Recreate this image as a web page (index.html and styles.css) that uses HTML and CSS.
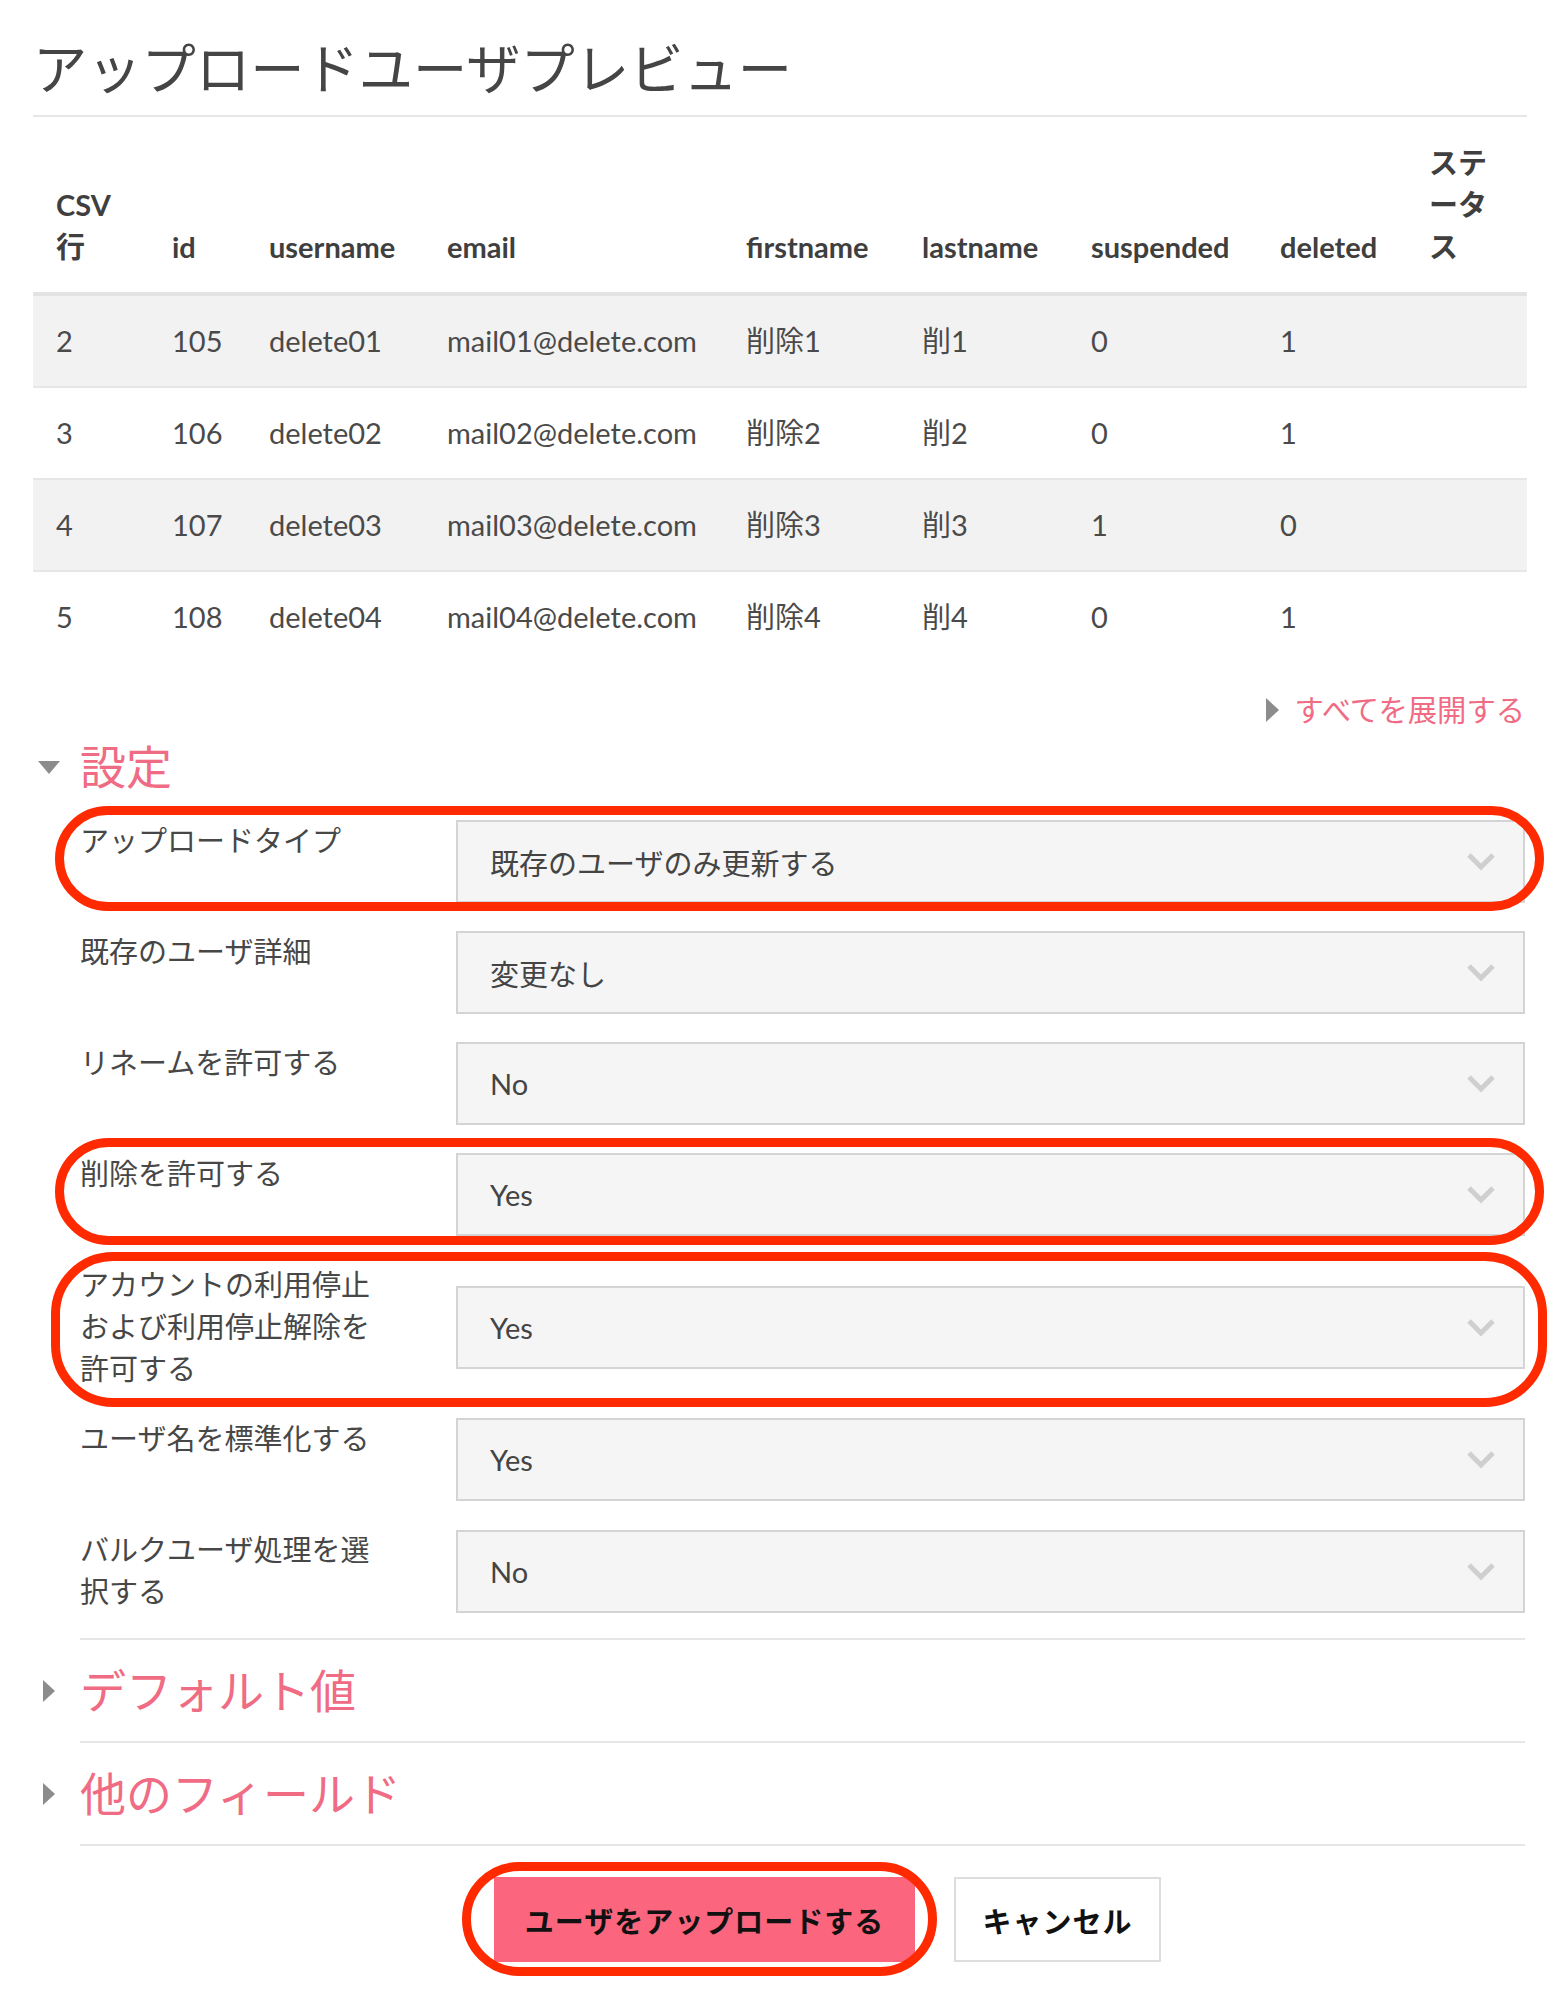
FILE: index.html
```html
<!DOCTYPE html>
<html lang="ja">
<head>
<meta charset="utf-8">
<title>アップロードユーザプレビュー</title>
<link rel="stylesheet" href="styles.css">
</head>
<body>
<div class="page">
  <h2 class="title">アップロードユーザプレビュー</h2>

  <table class="preview">
    <colgroup>
      <col class="c1"><col class="c2"><col class="c3"><col class="c4"><col class="c5"><col class="c6"><col class="c7"><col class="c8"><col class="c9">
    </colgroup>
    <thead>
      <tr>
        <th>CSV<br>行</th><th>id</th><th>username</th><th>email</th><th>firstname</th><th>lastname</th><th>suspended</th><th>deleted</th><th>ステ<br>ータ<br>ス</th>
      </tr>
    </thead>
    <tbody>
      <tr class="odd"><td>2</td><td>105</td><td>delete01</td><td>mail01@delete.com</td><td>削除1</td><td>削1</td><td>0</td><td>1</td><td></td></tr>
      <tr><td>3</td><td>106</td><td>delete02</td><td>mail02@delete.com</td><td>削除2</td><td>削2</td><td>0</td><td>1</td><td></td></tr>
      <tr class="odd"><td>4</td><td>107</td><td>delete03</td><td>mail03@delete.com</td><td>削除3</td><td>削3</td><td>1</td><td>0</td><td></td></tr>
      <tr class="last"><td>5</td><td>108</td><td>delete04</td><td>mail04@delete.com</td><td>削除4</td><td>削4</td><td>0</td><td>1</td><td></td></tr>
    </tbody>
  </table>

  <div class="expand-all">
    <svg class="tri-right-sm" width="13" height="24" viewBox="0 0 13 24"><path d="M0 0 L13 12 L0 24 Z" fill="#8c8c8c"/></svg>
    <a class="pink-link">すべてを展開する</a>
  </div>

  <div class="settings">
    <div class="legend">
      <svg class="tri-down" width="22" height="13" viewBox="0 0 22 13"><path d="M0 0 L22 0 L11 13 Z" fill="#8c8c8c"/></svg>
      <span class="legend-text">設定</span>
    </div>

    <div class="frow">
      <div class="mark mark-a"></div>
      <div class="flabel">アップロードタイプ</div>
      <div class="fselect"><span>既存のユーザのみ更新する</span><svg class="chev" width="30" height="19" viewBox="0 0 30 19"><path d="M3 3 L15 15 L27 3" fill="none" stroke="#cfcfcf" stroke-width="5"/></svg></div>
    </div>
    <div class="frow">
      <div class="flabel">既存のユーザ詳細</div>
      <div class="fselect"><span>変更なし</span><svg class="chev" width="30" height="19" viewBox="0 0 30 19"><path d="M3 3 L15 15 L27 3" fill="none" stroke="#cfcfcf" stroke-width="5"/></svg></div>
    </div>
    <div class="frow">
      <div class="flabel">リネームを許可する</div>
      <div class="fselect"><span>No</span><svg class="chev" width="30" height="19" viewBox="0 0 30 19"><path d="M3 3 L15 15 L27 3" fill="none" stroke="#cfcfcf" stroke-width="5"/></svg></div>
    </div>
    <div class="frow">
      <div class="mark mark-b"></div>
      <div class="flabel">削除を許可する</div>
      <div class="fselect"><span>Yes</span><svg class="chev" width="30" height="19" viewBox="0 0 30 19"><path d="M3 3 L15 15 L27 3" fill="none" stroke="#cfcfcf" stroke-width="5"/></svg></div>
    </div>
    <div class="frow">
      <div class="mark mark-c"></div>
      <div class="flabel">アカウントの利用停止および利用停止解除を許可する</div>
      <div class="fselect"><span>Yes</span><svg class="chev" width="30" height="19" viewBox="0 0 30 19"><path d="M3 3 L15 15 L27 3" fill="none" stroke="#cfcfcf" stroke-width="5"/></svg></div>
    </div>
    <div class="frow">
      <div class="flabel">ユーザ名を標準化する</div>
      <div class="fselect"><span>Yes</span><svg class="chev" width="30" height="19" viewBox="0 0 30 19"><path d="M3 3 L15 15 L27 3" fill="none" stroke="#cfcfcf" stroke-width="5"/></svg></div>
    </div>
    <div class="frow last-row">
      <div class="flabel">バルクユーザ処理を選択する</div>
      <div class="fselect"><span>No</span><svg class="chev" width="30" height="19" viewBox="0 0 30 19"><path d="M3 3 L15 15 L27 3" fill="none" stroke="#cfcfcf" stroke-width="5"/></svg></div>
    </div>

    <div class="section-sep"></div>

    <div class="collapsed">
      <div class="legend closed">
        <svg class="tri-right" width="12" height="22" viewBox="0 0 12 22"><path d="M0 0 L12 11 L0 22 Z" fill="#8c8c8c"/></svg>
        <span class="legend-text">デフォルト値</span>
      </div>
    </div>
    <div class="collapsed">
      <div class="legend closed">
        <svg class="tri-right" width="12" height="22" viewBox="0 0 12 22"><path d="M0 0 L12 11 L0 22 Z" fill="#8c8c8c"/></svg>
        <span class="legend-text">他のフィールド</span>
      </div>
    </div>

    <div class="buttons">
      <div class="btn-wrap">
        <div class="mark mark-d"></div>
        <button class="btn btn-primary">ユーザをアップロードする</button>
      </div>
      <button class="btn btn-secondary">キャンセル</button>
    </div>
  </div>
</div>
</body>
</html>
```

FILE: styles.css
```css
html, body {
  margin: 0;
  padding: 0;
  background: #ffffff;
}

body {
  font-family: Lato, "Noto Sans CJK JP", sans-serif;
  color: #464646;
}

.page {
  width: 1494px;
  margin-left: 33px;
  padding-bottom: 36px;
}

.title {
  margin: 36px 0 0;
  padding: 0;
  font-size: 54.3px;
  line-height: 64px;
  font-weight: 400;
  color: #454545;
  height: 79px;
  border-bottom: 2px solid #e6e6e6;
}

.preview {
  width: 1494px;
  border-collapse: collapse;
  table-layout: fixed;
  font-size: 29px;
  margin-top: 0;
}

.c1 { width: 116px; }
.c2 { width: 97px; }
.c3 { width: 178px; }
.c4 { width: 299px; }
.c5 { width: 176px; }
.c6 { width: 169px; }
.c7 { width: 189px; }
.c8 { width: 149px; }
.c9 { width: 121px; }

.preview th {
  text-align: left;
  vertical-align: bottom;
  font-weight: 700;
  color: #3f3f3f;
  line-height: 42px;
  padding: 25px 23px 24px;
  border-bottom: 4px solid #e3e3e3;
}

.preview td {
  line-height: 42px;
  padding: 24px 23px 24px;
  color: #4a4a4a;
  border-top: 2px solid #e6e6e6;
  white-space: nowrap;
}

.preview tr.odd td {
  background: #f2f2f2;
}

.expand-all {
  display: flex;
  justify-content: flex-end;
  align-items: center;
  margin-top: 27px;
  height: 42px;
  padding-right: 2px;
}

.tri-right-sm {
  margin-right: 15px;
}

.pink-link {
  font-size: 29.3px;
  line-height: 42px;
  color: #f06b84;
}

.settings {
  margin-left: 47px;
  width: 1445px;
}

.legend {
  display: flex;
  align-items: center;
  margin-left: -47px;
  height: 56px;
  margin-top: 8px;
  margin-bottom: 25px;
}

.tri-down {
  margin-left: 5px;
  margin-right: 20px;
}

.legend-text {
  font-size: 46px;
  line-height: 56px;
  color: #f06b84;
}

.frow {
  position: relative;
  display: flex;
  align-items: center;
  margin-bottom: 28px;
}

.frow.last-row {
  margin-bottom: 0;
}

.flabel {
  align-self: flex-start;
  width: 300px;
  margin-right: 76px;
  font-size: 29px;
  line-height: 42px;
  color: #474747;
}

.fselect {
  flex: 1;
  height: 83px;
  box-sizing: border-box;
  border: 2px solid #d4d4d4;
  background: #f5f5f5;
  display: flex;
  align-items: center;
  justify-content: space-between;
  padding: 0 27px 0 32px;
  font-size: 29px;
  color: #444;
}

.section-sep {
  height: 25px;
  border-bottom: 2px solid #e6e6e6;
}

.collapsed {
  height: 101px;
  border-bottom: 2px solid #e6e6e6;
  display: flex;
  align-items: center;
}

.collapsed .legend {
  margin-top: 0;
  margin-bottom: 0;
}

.tri-right {
  margin-left: 10px;
  margin-right: 25px;
}

.buttons {
  display: flex;
  align-items: center;
  margin-top: 31px;
  margin-left: 414px;
  gap: 39px;
}

.btn-wrap {
  position: relative;
}

.btn {
  height: 85px;
  font-family: Lato, "Noto Sans CJK JP", sans-serif;
  font-size: 29px;
  font-weight: 700;
  color: #111;
  letter-spacing: 1px;
  cursor: pointer;
}

.btn-primary {
  position: relative;
  display: block;
  width: 421px;
  background: #fb667e;
  border: none;
  padding: 0;
}

.btn-secondary {
  width: 207px;
  background: #ffffff;
  border: 2px solid #dddddd;
  padding: 0;
}

.mark {
  position: absolute;
  border: 9px solid #ff2a00;
  box-sizing: border-box;
  pointer-events: none;
  z-index: 2;
}

.mark-a {
  top: -14px;
  bottom: -8px;
  left: -25px;
  right: -19px;
  border-radius: 54px;
}

.mark-b {
  top: -15px;
  bottom: -9px;
  left: -25px;
  right: -19px;
  border-radius: 54px;
}

.mark-c {
  top: -12px;
  bottom: -17px;
  left: -29px;
  right: -22px;
  border-radius: 62px;
}

.mark-d {
  top: -15px;
  bottom: -14px;
  left: -32px;
  right: -22px;
  border-radius: 57px;
}
```
